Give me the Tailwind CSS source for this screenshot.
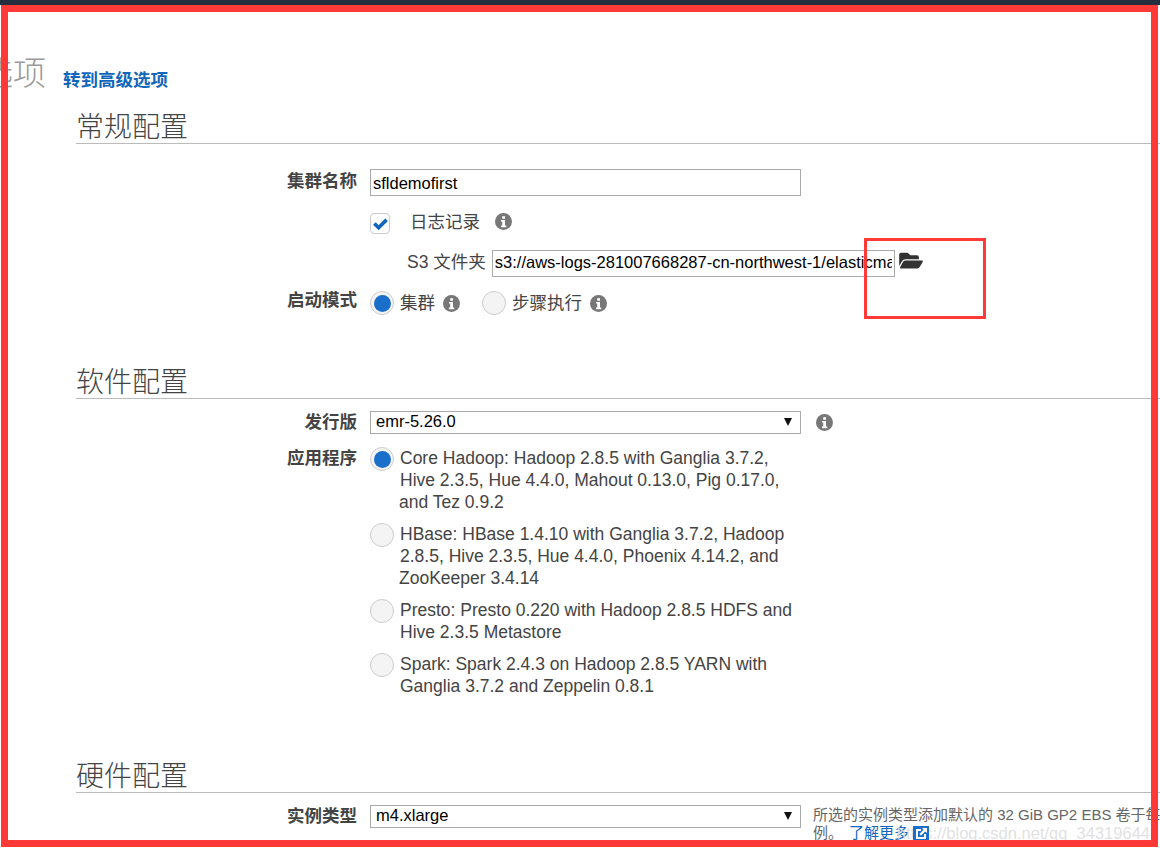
<!DOCTYPE html>
<html lang="zh-CN">
<head>
  <meta charset="UTF-8" />
  <title>创建集群 - 快速选项</title>
  <script src="https://cdn.jsdelivr.net/npm/@tailwindcss/browser@4"></script>
</head>
<body class="relative h-[851px] w-[1160px] overflow-hidden bg-white font-['Liberation_Sans','Noto_Sans_CJK_SC',sans-serif] text-[#444]">
  <div class="h-[5px] bg-[#232f3e]"></div>

  <main class="pl-[76px]">
    <!-- page title -->
    <div class="mt-[48px] -ml-[96px] flex h-[46px] items-start">
      <h1 class="text-[33px] leading-[42px] font-light text-[#999]">选项</h1>
      <a class="mt-[12px] ml-[17px] text-[17.5px] leading-[30px] font-bold text-[#1166bb]">转到高级选项</a>
    </div>

    <!-- general -->
    <h2 class="mt-[1px] h-[44px] border-b border-[#bbb] pt-[10px] text-[28px] leading-[36px] font-light">常规配置</h2>
    <div class="mt-[25px] flex">
      <label class="w-[281px] pt-[1px] text-right text-[17.5px] leading-[22px] font-bold">集群名称</label>
      <input value="sfldemofirst" class="ml-[13px] h-[27px] w-[431px] border border-[#aaa] px-[2px] pt-[2px] text-[16.5px] text-black" />
    </div>
    <div class="mt-[16px] ml-[294px] flex h-[22px] items-center">
      <span class="flex h-[21px] w-[20px] items-center justify-center rounded-[4px] border border-[#ccc] bg-white">
        <svg viewBox="0 0 16 16" class="h-[15px] w-[15px]"><path d="M1.5 8 6 12.5 14.5 4" fill="none" stroke="#1166bb" stroke-width="4"/></svg>
      </span>
      <span class="-mt-[2px] ml-[20px] text-[17.5px]">日志记录</span>
      <svg viewBox="0 0 16 16" class="-mt-[3px] ml-[15px] h-[17px] w-[17px]"><circle cx="8" cy="8" r="8" fill="#777"/><rect x="6.8" y="3" width="2.6" height="2.4" fill="#fff"/><path d="M5.6 6.6h3.8v5.2h1.2v1.5H5.6v-1.5h1.2V8.1H5.6z" fill="#fff"/></svg>
    </div>
    <div class="mt-[15px] ml-[331px] flex h-[28px] items-center">
      <span class="-mt-[2px] text-[17.5px]">S3 文件夹</span>
      <input value="s3://aws-logs-281007668287-cn-northwest-1/elasticmapreduce/" class="ml-[6px] h-[27px] w-[403px] border border-[#aaa] px-[2px] pb-[2px] text-[16.5px] text-black" />
      <svg viewBox="0 0 576 512" class="-mt-[6px] ml-[4px] h-[21px] w-[24px]"><path fill="#333" d="M572.694 292.093L500.27 416.248A63.997 63.997 0 0 1 444.989 448H45.025c-18.523 0-30.064-20.093-20.731-36.093l72.424-124.155A64 64 0 0 1 152 256h399.964c18.523 0 30.064 20.093 20.73 36.093zM152 224h328v-48c0-26.51-21.49-48-48-48H272l-64-64H48C21.49 64 0 85.49 0 112v278.046l69.077-118.418C86.214 242.25 117.989 224 152 224z"/></svg>
    </div>
    <div class="mt-[14px] flex">
      <label class="w-[281px] text-right text-[17.5px] leading-[19px] font-bold">启动模式</label>
      <div class="ml-[13px] flex h-[24px] items-center">
        <span class="flex h-[24px] w-[24px] items-center justify-center rounded-full border border-[#ccc] bg-[#f4f4f4]"><span class="h-[17px] w-[17px] rounded-full bg-[#1a6fcb]"></span></span>
        <span class="ml-[6px] text-[17.5px]">集群</span>
        <svg viewBox="0 0 16 16" class="ml-[8px] h-[17px] w-[17px]"><circle cx="8" cy="8" r="8" fill="#777"/><rect x="6.8" y="3" width="2.6" height="2.4" fill="#fff"/><path d="M5.6 6.6h3.8v5.2h1.2v1.5H5.6v-1.5h1.2V8.1H5.6z" fill="#fff"/></svg>
        <span class="ml-[22px] h-[24px] w-[24px] rounded-full border border-[#ccc] bg-[#f4f4f4]"></span>
        <span class="ml-[6px] text-[17.5px]">步骤执行</span>
        <svg viewBox="0 0 16 16" class="ml-[8px] h-[17px] w-[17px]"><circle cx="8" cy="8" r="8" fill="#777"/><rect x="6.8" y="3" width="2.6" height="2.4" fill="#fff"/><path d="M5.6 6.6h3.8v5.2h1.2v1.5H5.6v-1.5h1.2V8.1H5.6z" fill="#fff"/></svg>
      </div>
    </div>

    <!-- software -->
    <h2 class="mt-[40px] h-[44px] border-b border-[#bbb] pt-[10px] text-[28px] leading-[36px] font-light">软件配置</h2>
    <div class="mt-[12px] flex">
      <label class="w-[281px] text-right text-[17.5px] leading-[23px] font-bold">发行版</label>
      <div class="ml-[13px] flex h-[23px] w-[431px] items-center justify-between border border-[#aaa] bg-white pr-[8px] pb-[2px] pl-[5px] text-[16.5px] text-black">
        <span>emr-5.26.0</span>
        <svg viewBox="0 0 8 8" class="h-[8px] w-[8px]"><path d="M0 0h8L4 8z" fill="#111"/></svg>
      </div>
      <svg viewBox="0 0 16 16" class="mt-[3px] ml-[15px] h-[17px] w-[17px]"><circle cx="8" cy="8" r="8" fill="#777"/><rect x="6.8" y="3" width="2.6" height="2.4" fill="#fff"/><path d="M5.6 6.6h3.8v5.2h1.2v1.5H5.6v-1.5h1.2V8.1H5.6z" fill="#fff"/></svg>
    </div>
    <div class="mt-[13px] flex">
      <label class="w-[281px] text-right text-[17.5px] leading-[22px] font-bold">应用程序</label>
      <div class="ml-[13px] w-[440px] text-[17.5px] leading-[22px]">
        <div class="flex">
          <span class="flex h-[24px] w-[24px] shrink-0 items-center justify-center rounded-full border border-[#ccc] bg-[#f4f4f4]"><span class="h-[17px] w-[17px] rounded-full bg-[#1a6fcb]"></span></span>
          <p class="ml-[6px]">Core Hadoop: Hadoop 2.8.5 with Ganglia 3.7.2,<br>Hive 2.3.5, Hue 4.4.0, Mahout 0.13.0, Pig 0.17.0,<br><span class="-ml-px">and Tez 0.9.2</span></p>
        </div>
        <div class="mt-[10px] flex">
          <span class="h-[24px] w-[24px] shrink-0 rounded-full border border-[#ccc] bg-[#f4f4f4]"></span>
          <p class="ml-[6px]">HBase: HBase 1.4.10 with Ganglia 3.7.2, Hadoop<br>2.8.5, Hive 2.3.5, Hue 4.4.0, Phoenix 4.14.2, and<br><span class="-ml-px">ZooKeeper 3.4.14</span></p>
        </div>
        <div class="mt-[10px] flex">
          <span class="h-[24px] w-[24px] shrink-0 rounded-full border border-[#ccc] bg-[#f4f4f4]"></span>
          <p class="ml-[6px]">Presto: Presto 0.220 with Hadoop 2.8.5 HDFS and<br>Hive 2.3.5 Metastore</p>
        </div>
        <div class="mt-[10px] flex">
          <span class="h-[24px] w-[24px] shrink-0 rounded-full border border-[#ccc] bg-[#f4f4f4]"></span>
          <p class="ml-[6px]">Spark: Spark 2.4.3 on Hadoop 2.8.5 YARN with<br>Ganglia 3.7.2 and Zeppelin 0.8.1</p>
        </div>
      </div>
    </div>

    <!-- hardware -->
    <h2 class="mt-[52px] h-[44px] border-b border-[#bbb] pt-[10px] text-[28px] leading-[36px] font-light">硬件配置</h2>
    <div class="mt-[12px] flex">
      <label class="w-[281px] text-right text-[17.5px] leading-[23px] font-bold">实例类型</label>
      <div class="ml-[13px] flex h-[23px] w-[431px] shrink-0 items-center justify-between border border-[#aaa] bg-white pr-[8px] pb-[2px] pl-[5px] text-[16.5px] text-black">
        <span>m4.xlarge</span>
        <svg viewBox="0 0 8 8" class="h-[8px] w-[8px]"><path d="M0 0h8L4 8z" fill="#111"/></svg>
      </div>
      <div class="ml-[12px] w-[347px] shrink-0 pt-px text-[15px] leading-[18px] text-[#666]">
        <p class="whitespace-nowrap">所选的实例类型添加默认的 32 GiB GP2 EBS 卷于每个实</p>
        <p class="flex items-center whitespace-nowrap">例。<a class="ml-[6px] text-[#1166bb]">了解更多</a>
          <svg viewBox="0 0 16 16" class="relative z-10 ml-[4px] h-[16px] w-[16px]"><path d="M0 1h16v14H0z" fill="#1a6fcb"/><path d="M3 4h5v2H5v6h6V9h2v5H3z" fill="#fff"/><path d="M9 3h5v5l-1.8-1.6L8 10.5 6.5 9l4.1-4.2z" fill="#fff"/></svg>
        </p>
      </div>
    </div>
  </main>

  <!-- csdn watermark -->
  <span class="absolute top-[823px] right-[10px] text-[16.5px] leading-[20px] whitespace-nowrap text-[#ddd]/90">https://blog.csdn.net/qq_34319644</span>

  <!-- red annotation marks drawn on the screenshot -->
  <div class="pointer-events-none absolute top-[5px] left-[1px] z-20 h-[842px] w-[1157px] border-[7px] border-[#ff3838]"></div>
  <div class="pointer-events-none absolute top-[238px] left-[864px] z-20 h-[81px] w-[122px] border-[3px] border-[#ff3838]"></div>
</body>
</html>
